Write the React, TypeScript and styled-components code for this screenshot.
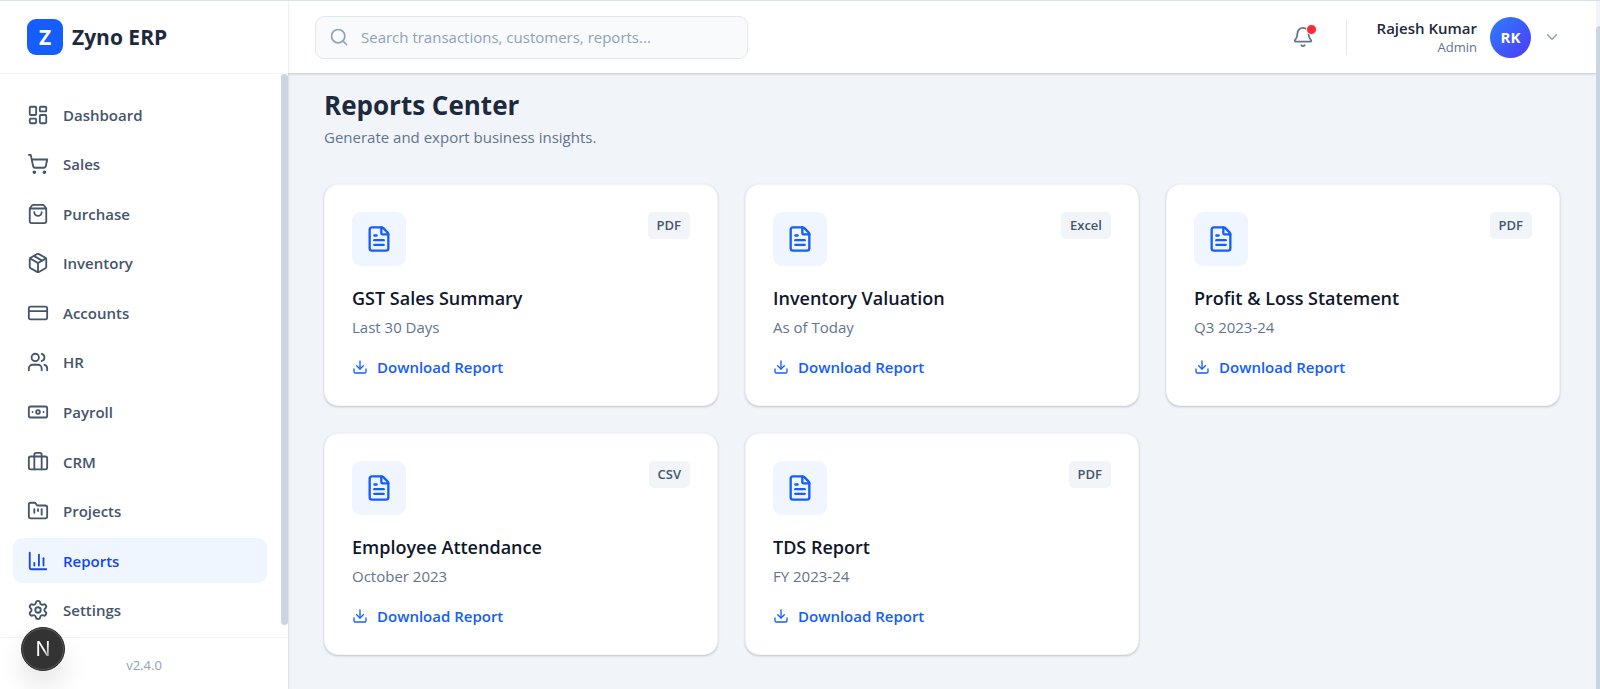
import React from "react";
import styled, { createGlobalStyle } from "styled-components";
import {
  LayoutDashboard,
  ShoppingCart,
  ShoppingBag,
  Package,
  CreditCard,
  Users,
  Banknote,
  Briefcase,
  FolderKanban,
  ChartColumn,
  Settings,
  Search,
  Bell,
  ChevronDown,
  FileText,
  Download,
} from "lucide-react";
import type { LucideIcon } from "lucide-react";

const color = {
  ink: "#1d293d",
  heading: "#0f172b",
  body: "#45556c",
  muted: "#62748e",
  faint: "#90a1b9",
  blue: "#155dfc",
  blueDark: "#1447e6",
  blueSoft: "#eff6ff",
  line: "#e2e8f0",
  lineSoft: "#f1f5f9",
  canvas: "#f1f4f9",
  thumb: "#cad5e2",
};

const GlobalStyle = createGlobalStyle`
  *, *::before, *::after { box-sizing: border-box; }
  body {
    margin: 0;
    background: ${color.canvas};
    color: ${color.ink};
    font-family: "Segoe UI", "Open Sans", "Noto Sans", sans-serif;
    font-size: 15px;
    line-height: 24px;
  }
  h1, h2, p, ul { margin: 0; padding: 0; }
  button, input { font: inherit; color: inherit; }
  svg { display: block; flex: none; }
`;

const Shell = styled.div`
  display: flex;
  height: 100vh;
  border-top: 1px solid #d8e3e6;
  overflow: hidden;
`;

const Sidebar = styled.aside`
  position: relative;
  z-index: 3;
  display: flex;
  flex-direction: column;
  flex: none;
  width: 288px;
  background: #fff;
  box-shadow: 0 1px 3px rgba(0, 0, 0, 0.1), 0 1px 2px rgba(0, 0, 0, 0.1);
`;

const Brand = styled.a`
  display: flex;
  align-items: center;
  gap: 9px;
  flex: none;
  height: 73px;
  padding: 0 27px;
  border-bottom: 1px solid ${color.lineSoft};
  color: ${color.ink};
  font-size: 21px;
  font-weight: 700;
  text-decoration: none;
`;

const BrandMark = styled.span`
  display: grid;
  place-items: center;
  width: 36px;
  height: 36px;
  border-radius: 9px;
  background: ${color.blue};
  color: #fff;
`;

const NavArea = styled.div`
  display: flex;
  flex: 1;
  min-height: 0;
`;

const Nav = styled.nav`
  flex: 1;
  padding: 18px 14px 0 13px;
  overflow: hidden;
`;

const NavList = styled.ul`
  display: grid;
  grid-auto-rows: 1fr;
  gap: 4px;
  height: 541px;
  list-style: none;
`;

const NavLink = styled.a<{ $active?: boolean }>`
  display: flex;
  align-items: center;
  gap: 14px;
  height: 100%;
  padding: 0 14px;
  border-radius: 9px;
  background: ${(p) => (p.$active ? color.blueSoft : "transparent")};
  color: ${(p) => (p.$active ? color.blueDark : color.body)};
  font-weight: 600;
  text-decoration: none;
`;

const SideThumb = styled.div`
  width: 7px;
  height: 551px;
  border-radius: 4px;
  background: ${color.thumb};
`;

const SideFooter = styled.footer`
  flex: none;
  height: 52px;
  padding: 15px;
  border-top: 1px solid ${color.lineSoft};
  color: ${color.faint};
  font-size: 13px;
  text-align: center;
`;

const DevBadge = styled.button`
  position: absolute;
  left: 21px;
  bottom: 18px;
  display: grid;
  place-items: center;
  width: 44px;
  height: 44px;
  padding: 0;
  border: 1px solid #2a2a2a;
  border-radius: 50%;
  background: #333;
  box-shadow: inset 0 0 0 1px #5a5a5a, 0 16px 32px -8px rgba(0, 0, 0, 0.24);
`;

const DevLetter = styled.span`
  background: linear-gradient(120deg, #fff 55%, #777 90%);
  background-clip: text;
  color: transparent;
  font-family: Inter, sans-serif;
  font-size: 20px;
`;

const Column = styled.div`
  display: flex;
  flex: 1;
  flex-direction: column;
  min-width: 0;
`;

const Topbar = styled.header`
  z-index: 2;
  display: flex;
  align-items: center;
  justify-content: space-between;
  flex: none;
  height: 72px;
  padding: 0 35px 0 27px;
  background: #fff;
  box-shadow: 0 1px 3px rgba(0, 0, 0, 0.1), 0 1px 2px rgba(0, 0, 0, 0.1);
`;

const SearchBox = styled.label`
  display: flex;
  align-items: center;
  gap: 12px;
  width: 433px;
  height: 43px;
  padding: 0 13px;
  border: 1px solid ${color.line};
  border-radius: 9px;
  background: #f8fafc;
  color: ${color.faint};
`;

const SearchInput = styled.input`
  flex: 1;
  min-width: 0;
  padding: 0;
  border: 0;
  outline: 0;
  background: transparent;
  color: ${color.ink};
  &::placeholder {
    color: ${color.faint};
    opacity: 1;
  }
`;

const Account = styled.div`
  display: flex;
  align-items: center;
`;

const BellButton = styled.button`
  position: relative;
  padding: 0;
  border: 0;
  background: none;
  color: ${color.muted};
`;

const BellDot = styled.span`
  position: absolute;
  top: -2px;
  right: -3px;
  width: 11px;
  height: 11px;
  border: 1px solid #fff;
  border-radius: 50%;
  background: #fb2c36;
`;

const Divider = styled.span`
  width: 1px;
  height: 36px;
  margin: 0 30px 0 32px;
  background: ${color.line};
`;

const ProfileButton = styled.button`
  display: flex;
  align-items: center;
  padding: 0;
  border: 0;
  background: none;
  color: ${color.faint};
`;

const Identity = styled.span`
  display: flex;
  flex-direction: column;
  align-items: flex-end;
  margin-right: 13px;
  padding-top: 2px;
  line-height: 19px;
`;

const UserName = styled.span`
  color: ${color.ink};
  font-weight: 600;
`;

const UserRole = styled.span`
  color: ${color.muted};
  font-size: 13px;
`;

const Avatar = styled.span`
  display: grid;
  place-items: center;
  width: 41px;
  height: 41px;
  margin-right: 12px;
  border-radius: 50%;
  background: linear-gradient(135deg, #2b7fff, #4f39f6);
  color: #fff;
  font-weight: 700;
`;

const Main = styled.main`
  flex: 1;
  padding: 14px 36px 32px;
  overflow: hidden;
`;

const PageTitle = styled.h1`
  font-size: 26px;
  font-weight: 700;
  line-height: 36px;
`;

const PageLead = styled.p`
  margin: 2px 0 35px;
  color: ${color.muted};
`;

const Grid = styled.div`
  display: grid;
  grid-template-columns: repeat(3, minmax(0, 1fr));
  gap: 27px;
`;

const Card = styled.article`
  padding: 27px 27px 26px;
  border: 1px solid ${color.lineSoft};
  border-radius: 14px;
  background: #fff;
  box-shadow: 0 1px 3px rgba(0, 0, 0, 0.1), 0 1px 2px rgba(0, 0, 0, 0.1);
`;

const CardTop = styled.div`
  display: flex;
  align-items: flex-start;
  justify-content: space-between;
  margin-bottom: 18px;
`;

const FileTile = styled.span`
  display: grid;
  place-items: center;
  width: 54px;
  height: 54px;
  border-radius: 9px;
  background: ${color.blueSoft};
  color: ${color.blue};
`;

const Format = styled.span`
  padding: 0 9px;
  border-radius: 5px;
  background: ${color.lineSoft};
  color: ${color.body};
  font-size: 13px;
  font-weight: 600;
  line-height: 27px;
`;

const CardTitle = styled.h2`
  color: ${color.heading};
  font-size: 18px;
  font-weight: 600;
  line-height: 28px;
`;

const Period = styled.p`
  margin: 3px 0 16px;
  color: ${color.muted};
`;

const DownloadButton = styled.button`
  display: flex;
  align-items: center;
  gap: 9px;
  padding: 0;
  border: 0;
  background: none;
  color: ${color.blue};
  font-weight: 600;
`;

const Rail = styled.div`
  z-index: 4;
  flex: none;
  width: 4px;
  padding-top: 25px;
  background: ${color.lineSoft};
`;

const RailThumb = styled.div`
  height: 100%;
  border-radius: 4px 0 0 0;
  background: ${color.thumb};
`;

const navItems: { label: string; icon: LucideIcon }[] = [
  { label: "Dashboard", icon: LayoutDashboard },
  { label: "Sales", icon: ShoppingCart },
  { label: "Purchase", icon: ShoppingBag },
  { label: "Inventory", icon: Package },
  { label: "Accounts", icon: CreditCard },
  { label: "HR", icon: Users },
  { label: "Payroll", icon: Banknote },
  { label: "CRM", icon: Briefcase },
  { label: "Projects", icon: FolderKanban },
  { label: "Reports", icon: ChartColumn },
  { label: "Settings", icon: Settings },
];

const reports = [
  { title: "GST Sales Summary", period: "Last 30 Days", format: "PDF" },
  { title: "Inventory Valuation", period: "As of Today", format: "Excel" },
  { title: "Profit & Loss Statement", period: "Q3 2023-24", format: "PDF" },
  { title: "Employee Attendance", period: "October 2023", format: "CSV" },
  { title: "TDS Report", period: "FY 2023-24", format: "PDF" },
];

export default function App() {
  return (
    <>
      <GlobalStyle />
      <Shell>
        <Sidebar>
          <Brand href="#">
            <BrandMark>Z</BrandMark>
            Zyno ERP
          </Brand>
          <NavArea>
            <Nav aria-label="Modules">
              <NavList>
                {navItems.map(({ label, icon: Icon }) => (
                  <li key={label}>
                    <NavLink href="#" $active={label === "Reports"}>
                      <Icon size={22} />
                      {label}
                    </NavLink>
                  </li>
                ))}
              </NavList>
            </Nav>
            <SideThumb />
          </NavArea>
          <SideFooter>v2.4.0</SideFooter>
          <DevBadge type="button">
            <DevLetter>N</DevLetter>
          </DevBadge>
        </Sidebar>
        <Column>
          <Topbar>
            <SearchBox>
              <Search size={20} />
              <SearchInput
                type="search"
                aria-label="Search"
                placeholder="Search transactions, customers, reports..."
              />
            </SearchBox>
            <Account>
              <BellButton type="button" aria-label="Notifications">
                <Bell size={22} />
                <BellDot />
              </BellButton>
              <Divider />
              <ProfileButton type="button">
                <Identity>
                  <UserName>Rajesh Kumar</UserName>
                  <UserRole>Admin</UserRole>
                </Identity>
                <Avatar>RK</Avatar>
                <ChevronDown size={18} />
              </ProfileButton>
            </Account>
          </Topbar>
          <Main>
            <PageTitle>Reports Center</PageTitle>
            <PageLead>Generate and export business insights.</PageLead>
            <Grid>
              {reports.map((r) => (
                <Card key={r.title}>
                  <CardTop>
                    <FileTile>
                      <FileText size={28} />
                    </FileTile>
                    <Format>{r.format}</Format>
                  </CardTop>
                  <CardTitle>{r.title}</CardTitle>
                  <Period>{r.period}</Period>
                  <DownloadButton type="button">
                    <Download size={16} />
                    Download Report
                  </DownloadButton>
                </Card>
              ))}
            </Grid>
          </Main>
        </Column>
        <Rail>
          <RailThumb />
        </Rail>
      </Shell>
    </>
  );
}
